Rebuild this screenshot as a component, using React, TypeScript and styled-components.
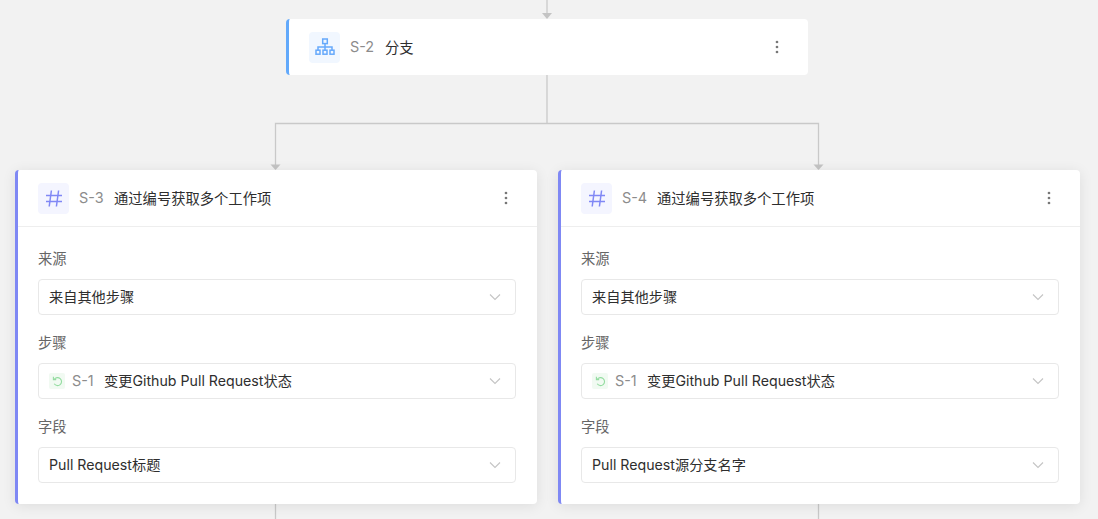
import React from "react";
import styled, { createGlobalStyle } from "styled-components";

const Global = createGlobalStyle`
  html, body { margin: 0; padding: 0; background: #f2f2f2; }
  body { font-family: Inter, "Noto Sans CJK SC", sans-serif; -webkit-font-smoothing: antialiased; }
`;

const Canvas = styled.div`
  position: relative;
  width: 1098px;
  height: 519px;
  overflow: hidden;
  background: #f2f2f2;
`;

const Wires = styled.svg`
  position: absolute;
  left: 0;
  top: 0;
`;

const Node = styled.section<{ $x: number; $y: number; $accent: string; $shadow?: boolean }>`
  position: absolute;
  left: ${(p) => p.$x}px;
  top: ${(p) => p.$y}px;
  width: 522px;
  box-sizing: border-box;
  background: #fff;
  border-left: 3px solid ${(p) => p.$accent};
  border-radius: 4px;
  box-shadow: ${(p) => (p.$shadow ? "0 2px 14px rgba(0,0,0,0.09)" : "none")};
`;

const Header = styled.header<{ $divider?: boolean }>`
  display: flex;
  align-items: center;
  padding: 0 29px 0 20px;
  box-sizing: border-box;
  border-bottom: ${(p) => (p.$divider ? "1px solid #eeeeee" : "none")};
  height: ${(p) => (p.$divider ? "57px" : "56px")};
`;

const IconBox = styled.div<{ $bg: string }>`
  display: flex;
  align-items: center;
  justify-content: center;
  width: 31px;
  height: 31px;
  border-radius: 4px;
  background: ${(p) => p.$bg};
  flex: none;
`;

const Code = styled.span`
  margin-left: 10px;
  padding-bottom: 1px;
  font-size: 14.4px;
  color: #8c8c8c;
  width: 35px;
  flex: none;
`;

const Title = styled.span`
  font-size: 14.3px;
  padding-bottom: 2px;
  color: #2e2e2e;
  flex: 1;
`;

const More = styled.svg`
  flex: none;
  display: block;
`;

const Body = styled.div`
  display: flex;
  flex-direction: column;
  padding: 20px 21px 21px 20px;
`;

const Field = styled.div`
  display: flex;
  flex-direction: column;
  margin-bottom: 16px;
  &:last-child { margin-bottom: 0; }
`;

const Label = styled.label`
  height: 24px;
  line-height: 24px;
  font-size: 14.3px;
  color: #666;
  margin-bottom: 8px;
`;

const Select = styled.div`
  display: flex;
  align-items: center;
  height: 36px;
  box-sizing: border-box;
  padding: 0 14px 0 10px;
  border: 1px solid #e8e8e8;
  border-radius: 4px;
  background: #fff;
  font-size: 14.2px;
  color: #2e2e2e;
`;

const SelectText = styled.span`
  flex: 1;
  padding-bottom: 2px;
  white-space: nowrap;
`;

const StepIcon = styled.div`
  display: flex;
  align-items: center;
  justify-content: center;
  width: 16px;
  height: 16px;
  border-radius: 2px;
  background: #f1faf2;
  margin-right: 7px;
  flex: none;
`;

const StepCode = styled.span`
  font-size: 14.4px;
  color: #8c8c8c;
  width: 32px;
  padding-bottom: 1px;
  flex: none;
`;

const Dots = () => (
  <More width="4" height="14" viewBox="0 0 4 14">
    <circle cx="2" cy="2" r="1.35" fill="#777" />
    <circle cx="2" cy="7" r="1.35" fill="#777" />
    <circle cx="2" cy="12" r="1.35" fill="#777" />
  </More>
);

const Chevron = () => (
  <svg width="12" height="8" viewBox="0 0 12 8" fill="none">
    <path d="M1 1.5 6 6.5 11 1.5" stroke="#c4c4c4" strokeWidth="1.1" />
  </svg>
);

const TreeIcon = () => (
  <svg width="20" height="18" viewBox="0 0 20 18" fill="none" stroke="#66a9fb" strokeWidth="1.5">
    <rect x="7.7" y="1" width="4.6" height="4.6" />
    <rect x="1" y="12.2" width="4" height="4" />
    <rect x="8" y="12.2" width="4" height="4" />
    <rect x="15" y="12.2" width="4" height="4" />
    <path d="M10 5.6V12.2M3 12.2V8.9H17V12.2" />
  </svg>
);

const HashIcon = () => (
  <svg width="18" height="17" viewBox="0 0 18 17" fill="none" stroke="#8088f5" strokeWidth="1.5">
    <path d="M6.4 0.5 4.2 16.5M13.6 0.5 11.4 16.5M1 5.5H17M1 11.5H17" />
  </svg>
);

const RetryIcon = () => (
  <svg width="11" height="11" viewBox="0 0 11 11" fill="none" stroke="#93dca0" strokeWidth="1.1">
    <path d="M2.2 3.4A4 4 0 1 1 2.2 7.8" />
    <path d="M1.4 0.8V3.6H4.2" />
  </svg>
);

type Row = { label: string; text: string; step?: boolean };

const Card = ({ x, code, rows }: { x: number; code: string; rows: Row[] }) => (
  <Node $x={x} $y={170} $accent="#7f88f4" $shadow>
    <Header $divider>
      <IconBox $bg="#f4f5ff"><HashIcon /></IconBox>
      <Code>{code}</Code>
      <Title>通过编号获取多个工作项</Title>
      <Dots />
    </Header>
    <Body>
      {rows.map((r) => (
        <Field key={r.label}>
          <Label>{r.label}</Label>
          <Select>
            {r.step && (
              <>
                <StepIcon><RetryIcon /></StepIcon>
                <StepCode>S-1</StepCode>
              </>
            )}
            <SelectText>{r.text}</SelectText>
            <Chevron />
          </Select>
        </Field>
      ))}
    </Body>
  </Node>
);

const baseRows = (last: string): Row[] => [
  { label: "来源", text: "来自其他步骤" },
  { label: "步骤", text: "变更Github Pull Request状态", step: true },
  { label: "字段", text: last },
];

export default function App() {
  return (
    <Canvas>
      <Global />
      <Wires width="1098" height="519" fill="none">
        <g stroke="#c9c9c9" strokeWidth="1.3">
          <path d="M547 0V13" />
          <path d="M547 75V123.5M275.5 166V123.5H818.5V166" />
          <path d="M275.5 504V519M818.5 504V519" />
        </g>
        <g fill="#c4c4c4">
          <path d="M542 13H552L547 19Z" />
          <path d="M270.5 164.5H280.5L275.5 170Z" />
          <path d="M813.5 164.5H823.5L818.5 170Z" />
        </g>
      </Wires>
      <Node $x={286} $y={19} $accent="#62a9fb">
        <Header>
          <IconBox $bg="#f1f7ff"><TreeIcon /></IconBox>
          <Code>S-2</Code>
          <Title>分支</Title>
          <Dots />
        </Header>
      </Node>
      <Card x={15} code="S-3" rows={baseRows("Pull Request标题")} />
      <Card x={558} code="S-4" rows={baseRows("Pull Request源分支名字")} />
    </Canvas>
  );
}
